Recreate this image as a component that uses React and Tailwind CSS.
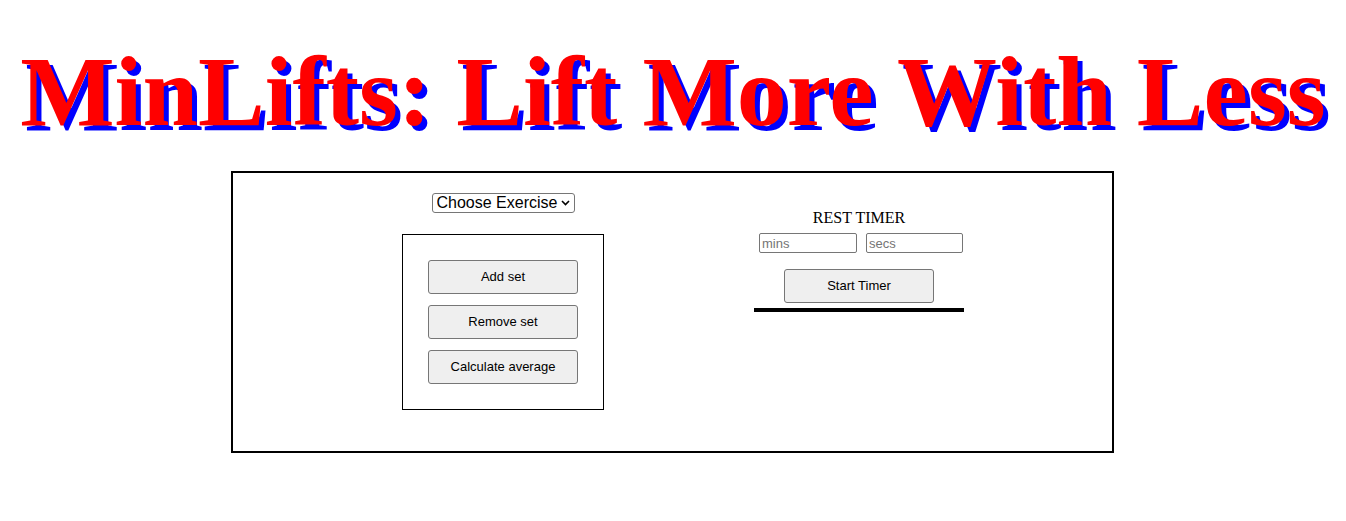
import React from "react";

function Btn({ children }) {
  return (
    <button
      type="button"
      className="w-[150px] h-[34px] bg-[#efefef] border border-[#767676] rounded-[3px] text-[13px] text-black [font-family:'Liberation_Sans',Arial,sans-serif]"
    >
      {children}
    </button>
  );
}

export default function App() {
  return (
    <div className="w-[1346px] h-[521px] bg-white overflow-hidden">
      <h1 className="pt-[36px] h-[171px] text-center text-[100px] leading-[111px] font-bold text-[#ff0000] [font-family:'Liberation_Serif','Times_New_Roman',serif] [text-shadow:5px_5px_0_#0000ff] whitespace-nowrap">
        MinLifts: Lift More With Less
      </h1>
      <div className="ml-[231px] w-[883px] h-[282px] border-2 border-black flex items-start pl-[169px] gap-[150px]">
        <div className="w-[202px] flex flex-col items-center pt-[20px]">
          <div className="relative w-[143px] h-[20px] border border-[#767676] rounded-[3px] bg-white">
            <select className="appearance-none block w-full h-[18px] bg-transparent pl-[4px] pr-[14px] py-0 text-[16px] leading-[18px] text-black [font-family:'Liberation_Sans',Arial,sans-serif] outline-none">
              <option>Choose Exercise</option>
            </select>
            <svg
              className="absolute right-[4px] top-[6px] pointer-events-none"
              width="9"
              height="6"
              viewBox="0 0 9 6"
            >
              <path d="M1 1 L4.5 4.5 L8 1" fill="none" stroke="#000" strokeWidth="1.6" />
            </svg>
          </div>
          <div className="mt-[21px] w-[202px] border border-black px-[25px] py-[25px] flex flex-col gap-[11px]">
            <Btn>Add set</Btn>
            <Btn>Remove set</Btn>
            <Btn>Calculate average</Btn>
          </div>
        </div>
        <div className="w-[210px] flex flex-col items-center pt-[36px]">
          <div className="h-[18px] leading-[18px] text-[16px] text-black [font-family:'Liberation_Serif','Times_New_Roman',serif]">
            REST TIMER
          </div>
          <div className="mt-[6px] flex gap-[9px] pl-[5px] w-full">
            <input
              placeholder="mins"
              className="w-[98px] h-[20px] border border-[#767676] rounded-[2px] px-[2px] text-[13px] placeholder:text-[#757575] [font-family:'Liberation_Sans',Arial,sans-serif]"
            />
            <input
              placeholder="secs"
              className="w-[97px] h-[20px] border border-[#767676] rounded-[2px] px-[2px] text-[13px] placeholder:text-[#757575] [font-family:'Liberation_Sans',Arial,sans-serif]"
            />
          </div>
          <div className="mt-[16px]">
            <Btn>Start Timer</Btn>
          </div>
          <div className="mt-[5px] w-[210px] h-[4px] bg-black" />
        </div>
      </div>
    </div>
  );
}
